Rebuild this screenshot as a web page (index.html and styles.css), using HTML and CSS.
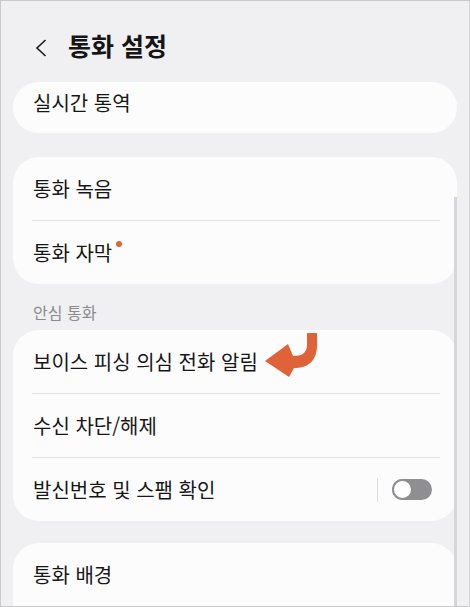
FILE: index.html
```html
<!DOCTYPE html>
<html lang="ko">
<head>
<meta charset="UTF-8">
<meta name="viewport" content="width=device-width, initial-scale=1.0">
<title>통화 설정</title>
<link rel="stylesheet" href="styles.css">
</head>
<body>
<div class="screen">
<div class="header">
<svg class="back" width="12" height="18" viewBox="0 0 12 18">
<polyline points="10.5,1 2,9 10.5,17"/>
</svg>
<h1>통화 설정</h1>
</div>

<div class="card card-top">
<div class="row">실시간 통역</div>
</div>

<div class="card">
<div class="row">통화 녹음</div>
<div class="divider"></div>
<div class="row"><span class="label">통화 자막<span class="dot"></span></span></div>
</div>

<div class="section-title">안심 통화</div>

<div class="card">
<div class="row with-arrow">보이스 피싱 의심 전화 알림
<!-- annotation arrow drawn over the row -->
<svg class="arrow" width="56" height="48" viewBox="0 0 56 48">
<path d="M45 2 H55 V14 C55 30 46 37 32 37 L27 46 L3 30 L26 13 L31 25 C40 25 45 22 45 14 Z"/>
</svg>
</div>
<div class="divider"></div>
<div class="row">수신 차단/해제</div>
<div class="divider"></div>
<div class="row">
<span class="grow">발신번호 및 스팸 확인</span>
<span class="sep"></span>
<span class="switch"><span class="knob"></span></span>
</div>
</div>

<div class="card card-last">
<div class="row">통화 배경</div>
</div>

<div class="scrollbar"></div>
</div>
</body>
</html>
```

FILE: styles.css
```css
body {
margin: 0;
padding: 0;
font-family: "Noto Sans CJK KR", "Noto Sans", sans-serif;
}

.screen {
position: relative;
width: 470px;
height: 607px;
box-sizing: border-box;
border: 1px solid #c9c9cb;
border-right-color: #d4d4d6;
background-color: #f0f0f2;
overflow: hidden;
display: flex;
flex-direction: column;
padding: 0 12px;
}

.header {
display: flex;
align-items: center;
height: 81px;
box-sizing: border-box;
padding: 6px 0 0 22px;
flex-shrink: 0;
}

.back {
fill: none;
stroke: #1b1b1b;
stroke-width: 1.6;
margin-top: 6px;
margin-right: 21px;
}

.header h1 {
margin: 0;
font-size: 25px;
font-weight: 700;
color: #151515;
line-height: 30px;
}

.card {
background-color: #fcfcfd;
border-radius: 26px;
flex-shrink: 0;
}

.card + .card {
margin-top: 24px;
}

.card-top {
height: 51px;
}

.card-top .row {
height: 40px;
}

.card-last {
margin-top: 22px !important;
height: 90px;
}

.row {
position: relative;
display: flex;
align-items: center;
height: 63px;
padding: 0 25px 0 20px;
font-size: 20px;
color: #161616;
}

.divider {
height: 1px;
background-color: #e2e2e5;
margin: 0 17px 0 19px;
}

.label {
position: relative;
}

.dot {
position: absolute;
right: -10px;
top: 3px;
width: 6px;
height: 6px;
border-radius: 50%;
background-color: #df6239;
}

.section-title {
padding: 18px 0 8px 20px;
font-size: 16px;
line-height: 20px;
color: #8a8a8d;
flex-shrink: 0;
}

.arrow {
position: absolute;
left: 249px;
top: 1px;
fill: #df6239;
}

.grow {
flex: 1;
}

.sep {
width: 1px;
height: 24px;
background-color: #dcdcde;
margin-right: 14px;
}

.switch {
position: relative;
width: 40px;
height: 21px;
border-radius: 11px;
background-color: #8e8e93;
}

.knob {
position: absolute;
left: 0;
top: 0;
width: 21px;
height: 21px;
box-sizing: border-box;
border-radius: 50%;
border: 2px solid #8e8e93;
background-color: #fff;
}

.scrollbar {
position: absolute;
left: 453px;
top: 196px;
bottom: 0;
width: 3px;
background-color: #d6d6d8;
}
```
